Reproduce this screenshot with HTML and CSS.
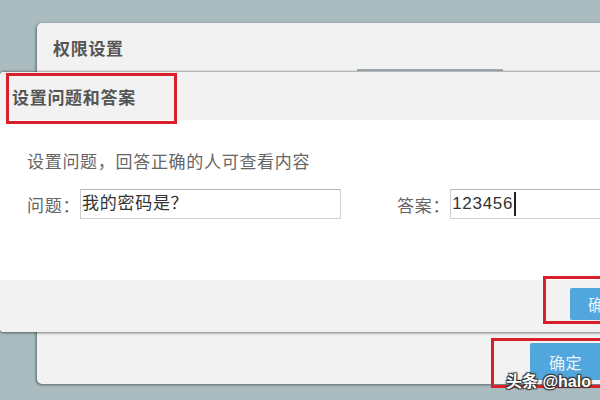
FILE: index.html
```html
<!DOCTYPE html>
<html lang="zh-CN">
<head>
  <meta charset="UTF-8">
  <meta name="viewport" content="width=device-width, initial-scale=1.0">
  <title>权限设置</title>
  <link rel="stylesheet" href="styles.css">
</head>
<body>
  <div class="page">
    <div class="dialog-back">
      <div class="back-header">
        <span class="title">权限设置</span>
        <span class="tab-line"></span>
      </div>
      <div class="back-body"></div>
      <div class="back-footer">
        <button class="btn btn-back">确定</button>
      </div>
    </div>
  </div>

  <div class="dialog-front">
    <div class="front-header">
      <span class="title">设置问题和答案</span>
    </div>
    <div class="front-body">
      <p class="intro">设置问题，回答正确的人可查看内容</p>
      <div class="form-row">
        <label class="label">问题：</label>
        <div class="input input-question">我的密码是？</div>
        <label class="label label-answer">答案：</label>
        <div class="input input-answer">123456<span class="caret"></span></div>
      </div>
    </div>
    <div class="front-footer">
      <button class="btn btn-front">确定</button>
    </div>
  </div>

  <!-- red highlight boxes drawn over the screenshot -->
  <div class="mark mark-title"></div>
  <div class="mark mark-front-btn"></div>
  <div class="mark mark-back-btn"></div>

  <div class="watermark">头条 @halo</div>
</body>
</html>
```

FILE: styles.css
```css
body {
  margin: 0;
  height: 400px;
  overflow: hidden;
  position: relative;
  background: #aabcc0;
  font-family: "Liberation Sans", "Noto Sans CJK SC", sans-serif;
  font-size: 17px;
  letter-spacing: 0.7px;
  color: #666;
}
.page {
  padding: 23px 0 0 37px;
}
.dialog-back {
  height: 361px;
  margin-right: -20px;
  background: #f2f2f2;
  border-radius: 5px 0 0 5px;
  box-shadow: -1px 1px 3px rgba(0,0,0,0.45);
  display: flex;
  flex-direction: column;
}
.back-header {
  height: 49px;
  display: flex;
  align-items: center;
  padding-left: 16px;
  position: relative;
}
.title {
  font-weight: bold;
  color: #555;
}
.tab-line {
  position: absolute;
  left: 320px;
  bottom: 1px;
  width: 146px;
  height: 2px;
  background: #8a9ba1;
  opacity: 0.8;
}
.back-body {
  flex: 1;
}
.back-footer {
  display: flex;
  justify-content: flex-end;
  padding: 0 10px 4px 0;
}
.btn {
  border: none;
  background: #52a6de;
  color: #eaf4fb;
  font-family: inherit;
  font-size: 16px;
  letter-spacing: 0.5px;
  border-radius: 2px;
  white-space: nowrap;
  text-align: left;
}
.btn-back {
  width: 80px;
  height: 37px;
  padding-left: 19px;
}
.dialog-front {
  position: absolute;
  left: 0;
  top: 72px;
  width: 620px;
  height: 260px;
  border-radius: 4px 0 0 4px;
  overflow: hidden;
  background: #fff;
  box-shadow: 0 1px 3px rgba(0,0,0,0.5), 0 -1px 2px rgba(0,0,0,0.25);
  display: flex;
  flex-direction: column;
}
.front-header {
  height: 48px;
  background: #f2f2f2;
  display: flex;
  align-items: center;
  padding-left: 12px;
}
.front-body {
  height: 160px;
  padding-left: 27px;
}
.intro {
  margin: 31px 0 0;
  line-height: 24px;
}
.form-row {
  display: flex;
  align-items: center;
  margin-top: 14px;
}
.label {
  flex: none;
  white-space: nowrap;
}
.input {
  flex: none;
  height: 28px;
  border: 1px solid #cfcfcf;
  border-top-color: #b5b5b5;
  color: #333;
  line-height: 28px;
  padding-left: 1px;
  box-sizing: content-box;
  white-space: nowrap;
}
.input-question {
  width: 258px;
}
.label-answer {
  margin-left: 56px;
}
.input-answer {
  width: 200px;
  display: flex;
  align-items: center;
}
.caret {
  width: 1.5px;
  height: 24px;
  background: #222;
  margin-left: 1px;
}
.front-footer {
  flex: 1;
  background: #f2f2f2;
  padding: 8px 0 0 570px;
}
.btn-front {
  width: 60px;
  height: 32px;
  padding-left: 18px;
}
.mark {
  position: absolute;
  border: 3px solid #d8202a;
  box-sizing: border-box;
}
.mark-title {
  left: 6px;
  top: 73px;
  width: 171px;
  height: 51px;
}
.mark-front-btn {
  left: 543px;
  top: 276px;
  width: 70px;
  height: 48px;
}
.mark-back-btn {
  left: 491px;
  top: 338px;
  width: 120px;
  height: 50px;
}
.watermark {
  position: absolute;
  left: 506px;
  top: 368px;
  font-size: 16px;
  font-weight: bold;
  letter-spacing: 0;
  color: #fff;
  text-shadow: 1px 1px 1px #333, -1px -1px 1px #333, 1px -1px 1px #333, -1px 1px 1px #333;
}
```
